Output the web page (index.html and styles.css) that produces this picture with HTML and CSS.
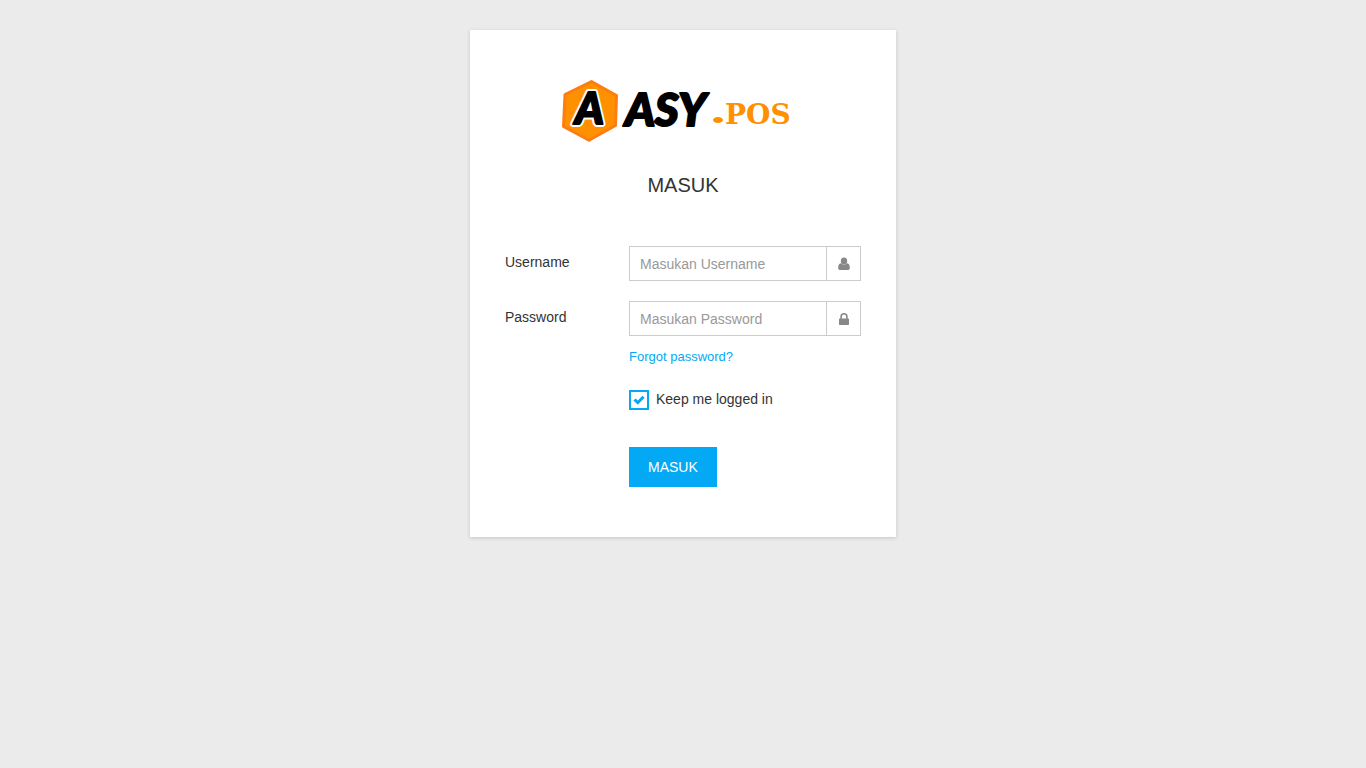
FILE: index.html
```html
<!DOCTYPE html>
<html lang="id">
<head>
<meta charset="utf-8">
<meta name="viewport" content="width=device-width, initial-scale=1">
<title>Aasy.pos - Masuk</title>
<link rel="stylesheet" href="styles.css">
</head>
<body>
<main class="card">
  <svg class="logo" viewBox="0 0 244 64" role="img" aria-label="Aasy.pos">
    <path class="logo-hex" d="M30.500 2.500 L55.500 16.500 L54.500 46.500 L28 61.200 L2.500 47.500 L4 15.500 Z"/>
    <text class="logo-mark logo-halo" x="14" y="45">A</text>
    <text class="logo-mark" x="14" y="45">A</text>
    <text class="logo-name" x="64" y="47">ASY</text>
    <ellipse class="logo-dot" cx="157" cy="41" rx="5" ry="3"/>
    <text class="logo-suffix" x="164" y="45">POS</text>
  </svg>
  <h1 class="title">MASUK</h1>
  <form class="form">
    <div class="row">
      <label class="label" for="username">Username</label>
      <div class="group">
        <input class="input" id="username" type="text" placeholder="Masukan Username">
        <span class="addon">
          <svg class="icon" viewBox="0 0 12 14" aria-hidden="true"><ellipse cx="6" cy="4" rx="3.200" ry="3.500"/><path d="M2.900 6.200 C4.700 8.100 7.300 8.100 9.100 6.200 C11.200 6.400 11.800 8.500 11.800 11 C11.800 12.200 11.200 12.900 10 12.900 H2 C.8 12.900 .2 12.200 .2 11 C.2 8.500 .8 6.400 2.900 6.200 Z"/></svg>
        </span>
      </div>
    </div>
    <div class="row">
      <label class="label" for="password">Password</label>
      <div>
        <div class="group">
          <input class="input" id="password" type="password" placeholder="Masukan Password">
          <span class="addon">
            <svg class="icon" viewBox="0 0 12 14" aria-hidden="true"><path fill-rule="evenodd" d="M2.300 6.500 V4.700 A3.700 3.700 0 0 1 9.700 4.700 V6.500 C10.600 6.500 11 6.900 11 7.400 V12 C11 12.600 10.600 13 10 13 H2 C1.400 13 1 12.600 1 12 V7.400 C1 6.900 1.400 6.500 2.300 6.500 Z M3.900 6.500 H8.100 V4.700 A2.100 2.100 0 0 0 3.900 4.700 Z"/></svg>
          </span>
        </div>
        <a class="forgot" href="#">Forgot password?</a>
      </div>
    </div>
    <div class="row">
      <label class="remember">
        <span class="check">
          <input class="box" type="checkbox" checked>
          <svg class="tick" viewBox="0 0 12 12" aria-hidden="true"><path d="M1.500 5.500 L4.800 8.700 L10.500 2.700"/></svg>
        </span>
        Keep me logged in
      </label>
    </div>
    <div class="row">
      <button class="submit" type="submit">MASUK</button>
    </div>
  </form>
</main>
</body>
</html>
```

FILE: styles.css
```css
* { box-sizing: border-box; }

body {
  margin: 0;
  padding: 30px 15px;
  background: #ebebeb;
  color: #333;
  font: 14px/20px "Liberation Sans", Arial, sans-serif;
}

.card {
  max-width: 426px;
  margin: 0 auto;
  padding: 49px 35px 50px;
  background: #fff;
  box-shadow: 0 1px 4px rgba(0, 0, 0, .16);
}

.logo {
  display: block;
  width: 244px;
  height: 64px;
  margin: 0 auto;
}

.logo-hex {
  fill: #ff9000;
  stroke: #fd7d12;
  stroke-width: 3px;
  stroke-linejoin: round;
}

.logo-mark,
.logo-name {
  stroke: #000;
  stroke-width: 2px;
  stroke-linejoin: round;
  font-family: Lato, sans-serif;
  font-size: 44px;
  font-weight: 900;
  font-style: italic;
}

.logo-halo {
  stroke: #fff;
  stroke-width: 6px;
}

.logo-name { font-size: 46px; }

.logo-dot,
.logo-suffix { fill: #ff9000; }

.logo-suffix {
  font-family: "DejaVu Serif", serif;
  font-size: 28px;
  font-weight: 700;
}

.title {
  margin: 30px 0 49px;
  font-size: 20px;
  font-weight: 400;
  line-height: 24px;
  text-align: center;
}

.form {
  display: grid;
  gap: 20px;
}

.row {
  display: grid;
  grid-template-columns: minmax(0, 1fr) minmax(0, 2fr);
  gap: 8px;
}

.label { padding-top: 6px; }

.group {
  display: flex;
  height: 35px;
  border: 1px solid #ccc;
}

.input {
  flex: 1;
  min-width: 0;
  padding: 0 10px;
  border: 0;
  background: none;
  color: #555;
  font: inherit;
}

.input::placeholder {
  color: #999;
  opacity: 1;
}

.addon {
  display: grid;
  place-items: center;
  width: 34px;
  border-left: 1px solid #ccc;
}

.icon {
  width: 12px;
  height: 14px;
  fill: #888;
}

.forgot {
  display: block;
  margin-top: 11px;
  color: #03a9f4;
  font-size: 13px;
  line-height: 20px;
  text-decoration: none;
}

.remember,
.submit { grid-column: 2; }

.remember {
  display: flex;
  gap: 7px;
  margin-top: 3px;
  line-height: 18px;
}

.check {
  display: grid;
  place-items: center;
}

.box,
.tick { grid-area: 1 / 1; }

.box {
  appearance: none;
  width: 20px;
  height: 20px;
  margin: 0;
  border: 2px solid #03a9f4;
}

.tick {
  width: 12px;
  height: 12px;
  fill: none;
  stroke: #03a9f4;
  stroke-width: 3px;
  pointer-events: none;
}

.box:not(:checked) + .tick { visibility: hidden; }

.submit {
  justify-self: start;
  height: 40px;
  margin-top: 17px;
  padding: 0 19px;
  border: 0;
  background: #03a9f4;
  color: #fff;
  font: inherit;
}
```
